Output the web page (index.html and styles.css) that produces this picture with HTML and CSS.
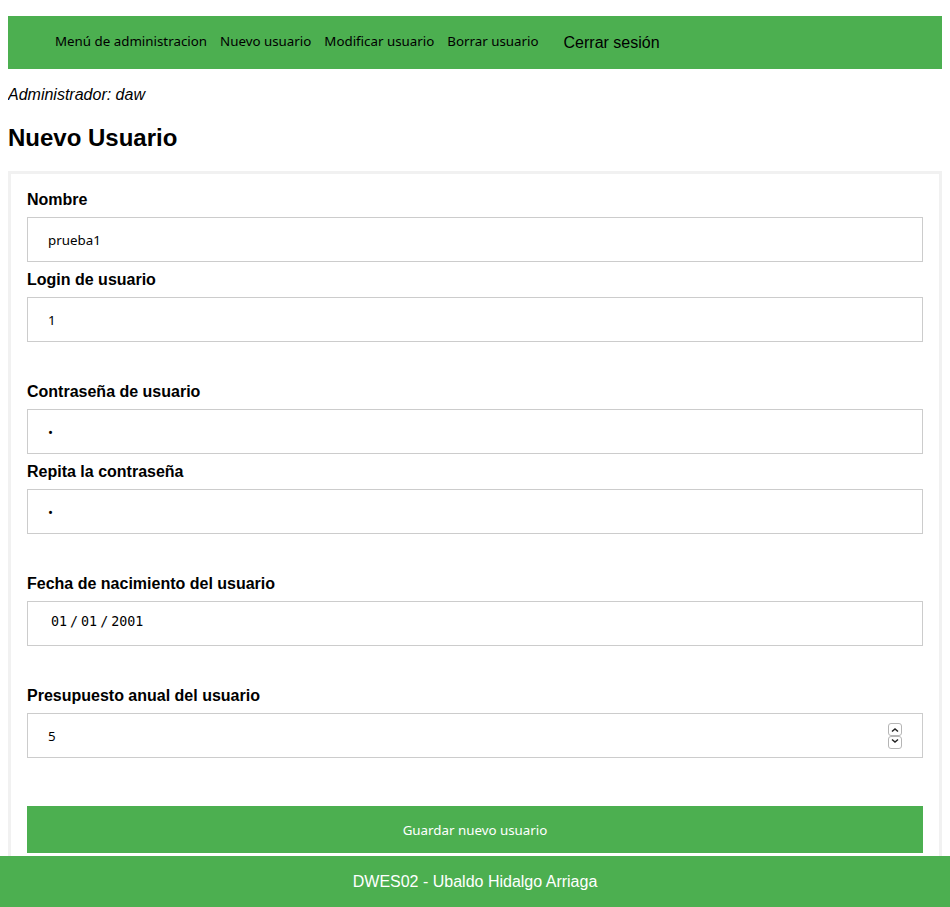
FILE: index.html
```html
<!DOCTYPE html>
<html lang="es">
<head>
<meta charset="utf-8">
<title>Nuevo Usuario</title>
<link rel="stylesheet" href="styles.css">
</head>
<body>
<nav class="menu">
  <button class="menu-item" type="button">Menú de administracion</button>
  <button class="menu-item" type="button">Nuevo usuario</button>
  <button class="menu-item" type="button">Modificar usuario</button>
  <button class="menu-item" type="button">Borrar usuario</button>
  <a class="menu-link" href="#">Cerrar sesión</a>
</nav>
<p class="role">Administrador: daw</p>
<h2 class="title">Nuevo Usuario</h2>
<form class="user-form">
  <div class="group">
    <label class="label" for="nombre">Nombre</label>
    <input class="field" id="nombre" type="text" value="prueba1">
    <label class="label" for="login">Login de usuario</label>
    <input class="field" id="login" type="text" value="1">
  </div>
  <div class="group">
    <label class="label" for="clave">Contraseña de usuario</label>
    <input class="field" id="clave" type="password" value="1">
    <label class="label" for="clave2">Repita la contraseña</label>
    <input class="field" id="clave2" type="password" value="1">
  </div>
  <div class="group">
    <label class="label" for="fecha">Fecha de nacimiento del usuario</label>
    <input class="field field-date" id="fecha" type="date" value="2001-01-01">
  </div>
  <div class="group">
    <label class="label" for="presupuesto">Presupuesto anual del usuario</label>
    <div class="number">
      <input class="field field-number" id="presupuesto" type="number" value="5">
      <div class="spin">
        <button class="spin-btn" type="button" aria-label="Aumentar"><svg class="chevron" viewBox="0 0 8 6"><path d="M1 4.500 4 2l3 2.500"/></svg></button>
        <button class="spin-btn spin-down" type="button" aria-label="Disminuir"><svg class="chevron" viewBox="0 0 8 6"><path d="M1 1.500 4 4l3-2.500"/></svg></button>
      </div>
    </div>
  </div>
  <button class="save" type="submit">Guardar nuevo usuario</button>
</form>
<footer class="footer">DWES02 - Ubaldo Hidalgo Arriaga</footer>
</body>
</html>
```
FILE: styles.css
```css
* { box-sizing: border-box; }
body {
  margin: 16px 8px 0;
  font: 16px/19px "Liberation Sans", Arial, sans-serif;
  color: #000;
  background: #fff;
}
.menu {
  display: flex;
  align-items: center;
  gap: 1px;
  min-height: 53px;
  padding-left: 41px;
  background: #4caf50;
}
.menu-item {
  margin: 0;
  padding: 0 6px 4px;
  border: 0;
  background: none;
  color: #000;
  font-family: "Noto Sans", sans-serif;
}
.menu-link {
  margin-left: 18px;
  color: #000;
  text-decoration: none;
}
.role { margin: 16px 0 20px; font-style: italic; }
.title { margin: 0 0 20px; font-size: 24px; line-height: 27px; }
.user-form {
  padding: 16px 16px 80px;
  border: 3px solid #f1f1f1;
}
.group { margin-bottom: 40px; }
.label { display: block; font-weight: bold; }
.field {
  display: block;
  width: 100%;
  height: 45px;
  margin: 8px 0;
  padding: 12px 20px;
  border: 1px solid #ccc;
  border-radius: 0;
  background: #fff;
  color: #000;
  font-family: "Noto Sans", sans-serif;
}
.field-date {
  padding: 8px 22px 12px;
  font-family: "DejaVu Sans Mono", monospace;
}
.field-date::-webkit-calendar-picker-indicator { display: none; }
.field-date::-webkit-datetime-edit-text { padding: 0 2px; }
.field-number { appearance: textfield; }
.number { position: relative; }
.spin {
  position: absolute;
  top: 10px;
  right: 21px;
  display: flex;
  flex-direction: column;
}
.spin-btn {
  display: flex;
  align-items: center;
  justify-content: center;
  width: 14px;
  height: 13px;
  padding: 0;
  border: 1px solid #b5b5b5;
  border-radius: 3px;
  background: #fff;
}
.spin-down { padding-bottom: 3px; }
.chevron {
  width: 8px;
  height: 6px;
  fill: none;
  stroke: #222;
  stroke-width: 1.5;
}
.save {
  display: block;
  width: 100%;
  height: 47px;
  margin-top: 48px;
  border: 0;
  background: #4caf50;
  color: #fff;
  font-family: "Noto Sans", sans-serif;
}
.footer {
  position: fixed;
  right: 0;
  bottom: 0;
  left: 0;
  padding: 16px;
  background: #4caf50;
  color: #fff;
  text-align: center;
}
```
